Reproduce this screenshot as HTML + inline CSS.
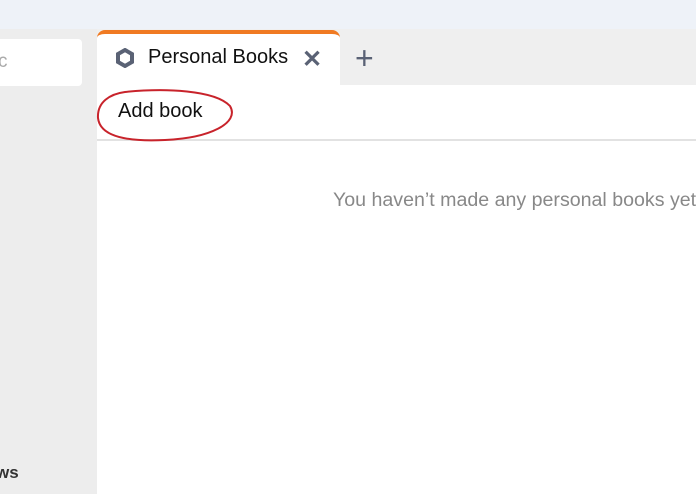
<html><head><style>
body{margin:0;width:696px;height:494px;position:relative;overflow:hidden;background:#ededed;font-family:"Liberation Sans",sans-serif}
div{position:absolute;box-sizing:border-box}
</style></head><body>
<div style="left:0;top:0;width:696px;height:29px;background:#eef2f8"></div>
<div style="left:0;top:39px;width:82px;height:47px;background:#fff;border-radius:0 4px 4px 0"></div>
<div style="left:-2px;top:51px;font-size:19px;color:#aaa">c</div>
<div style="left:-4px;top:463px;font-size:17px;color:#333;font-weight:bold">ws</div>
<div style="left:97px;top:29px;width:599px;height:465px;background:#efefef"></div>
<div style="left:97px;top:85px;width:599px;height:409px;background:#fff"></div>
<div style="left:97px;top:139px;width:599px;height:2px;background:#e2e2e2"></div>
<div style="left:97px;top:30px;width:243px;height:56px;background:#fff;border-top:4px solid #f07a22;border-radius:8px 8px 0 0"></div>
<svg style="position:absolute;left:115px;top:48px" width="20" height="20" viewBox="0 0 20 20"><polygon points="10,2 17,6 17,14 10,18 3,14 3,6" fill="none" stroke="#5a6275" stroke-width="4"/></svg>
<div style="left:148px;top:46px;font-size:20px;color:#111">Personal Books</div>
<div style="left:302px;top:45px;font-size:24px;color:#5a6275;font-weight:bold">✕</div>
<div style="left:355px;top:40px;font-size:32px;color:#5a6275">+</div>
<div style="left:118px;top:100px;font-size:20px;color:#111">Add book</div>
<svg style="position:absolute;left:95px;top:88px" width="145" height="56"><path d="M30,4 C70,0 120,2 135,18 C145,35 115,50 70,52 C30,54 5,48 3,30 C2,14 15,6 30,4 Z" fill="none" stroke="#c8232b" stroke-width="2"/></svg>
<div style="left:333px;top:189px;font-size:19.6px;color:#888;white-space:nowrap">You haven’t made any personal books yet</div>
</body></html>
